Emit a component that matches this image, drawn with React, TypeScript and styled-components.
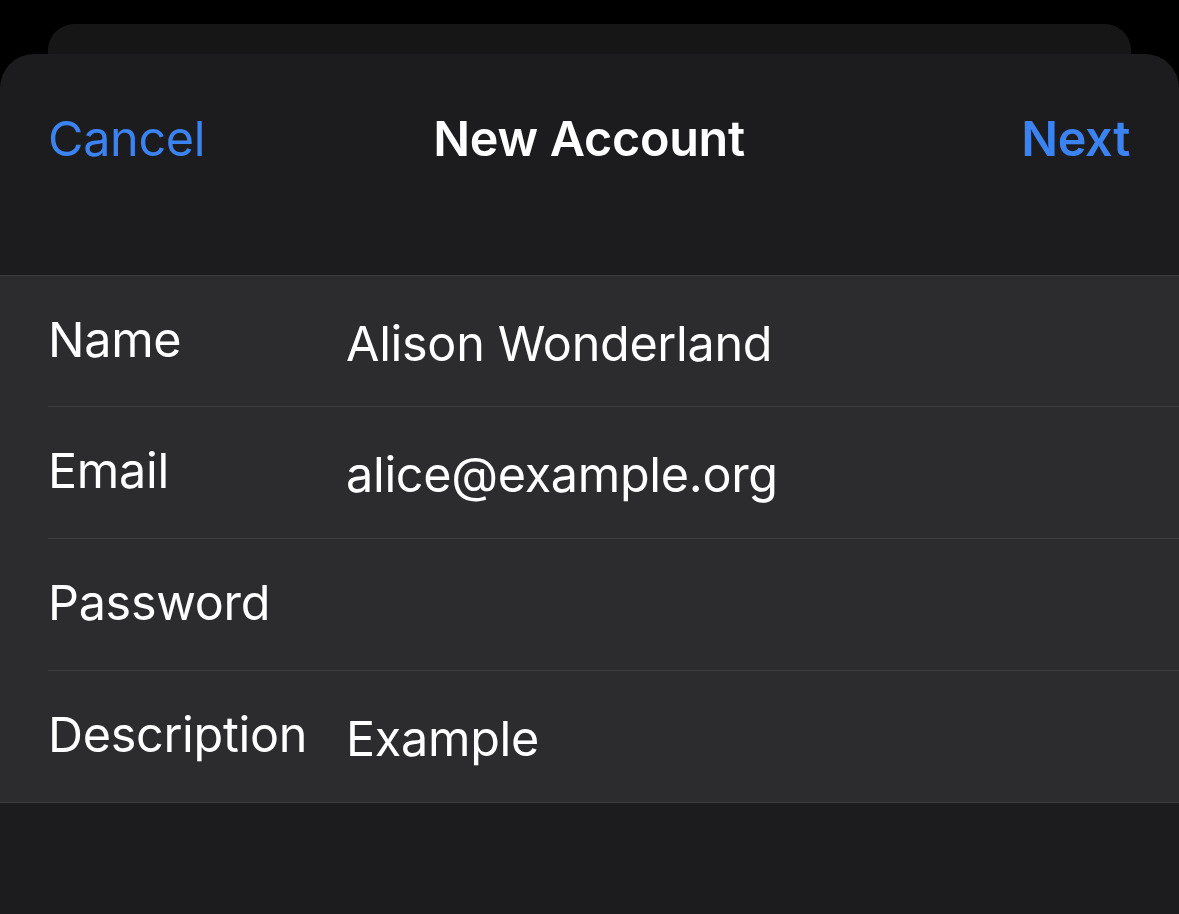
import React from "react";
import styled, { createGlobalStyle } from "styled-components";

const Global = createGlobalStyle`
  html, body { margin: 0; padding: 0; background: #000; }
  body { font-family: Inter, "Noto Sans", "Liberation Sans", sans-serif; -webkit-font-smoothing: antialiased; }
`;

const Screen = styled.div`
  width: 1179px;
  height: 914px;
  overflow: hidden;
  background: #000;
  padding-top: 24px;
  box-sizing: border-box;
  display: flex;
  flex-direction: column;
`;

const BackCard = styled.div`
  margin: 0 48px;
  height: 30px;
  flex: none;
  background: #161616;
  border-radius: 26px 26px 0 0;
`;

const Sheet = styled.div`
  flex: 1;
  background: #1c1c1e;
  border-radius: 34px 34px 0 0;
  display: flex;
  flex-direction: column;
`;

const NavBar = styled.div`
  height: 168px;
  padding: 0 49px 0 48px;
  display: grid;
  grid-template-columns: 1fr auto 1fr;
  align-items: center;
`;

const NavButton = styled.button<{ $bold?: boolean; $align: "left" | "right" }>`
  all: unset;
  justify-self: ${(p) => (p.$align === "left" ? "start" : "end")};
  color: #3b83f1;
  font-size: 48.5px;
  font-weight: ${(p) => (p.$bold ? 600 : 400)};
  letter-spacing: -0.3px;
  cursor: pointer;
`;

const Title = styled.div`
  color: #fff;
  font-size: 48.5px;
  font-weight: 600;
  letter-spacing: -0.3px;
`;

const Group = styled.div`
  margin-top: 53px;
  background: #2c2c2e;
  border-top: 1px solid #3d3d40;
  border-bottom: 1px solid #3d3d40;
`;

const Row = styled.div<{ $first?: boolean }>`
  box-sizing: border-box;
  margin-left: 48px;
  height: ${(p) => (p.$first ? "130px" : "132px")};
  display: grid;
  grid-template-columns: 298px 1fr;
  align-items: center;
  border-top: ${(p) => (p.$first ? "none" : "1px solid #3d3d40")};
`;

const Label = styled.div`
  color: #fff;
  font-size: 48.5px;
  letter-spacing: -0.3px;
  margin-top: -4px;
`;

const Value = styled.div`
  color: #fff;
  font-size: 48.5px;
  letter-spacing: -0.3px;
  margin-top: 4px;
`;

const rows = [
  { label: "Name", value: "Alison Wonderland" },
  { label: "Email", value: "alice@example.org" },
  { label: "Password", value: "" },
  { label: "Description", value: "Example" },
];

export default function App() {
  return (
    <>
      <Global />
      <Screen>
        <BackCard />
        <Sheet>
          <NavBar>
            <NavButton $align="left">Cancel</NavButton>
            <Title>New Account</Title>
            <NavButton $align="right" $bold>Next</NavButton>
          </NavBar>
          <Group>
            {rows.map((r, i) => (
              <Row key={r.label} $first={i === 0}>
                <Label>{r.label}</Label>
                <Value>{r.value}</Value>
              </Row>
            ))}
          </Group>
        </Sheet>
      </Screen>
    </>
  );
}
